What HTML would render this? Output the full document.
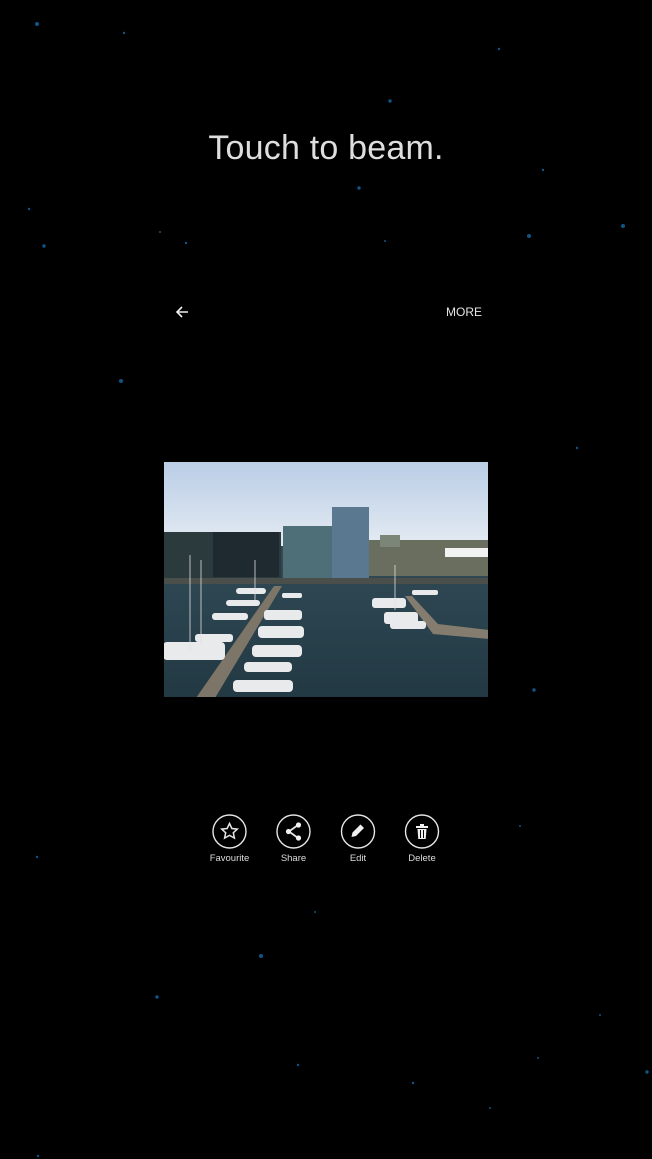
<!DOCTYPE html>
<html><head><meta charset="utf-8"><style>
html,body{margin:0;padding:0;background:#000;width:652px;height:1159px;overflow:hidden;font-family:"Liberation Sans",sans-serif;}
.t{position:absolute;left:0;width:652px;top:129px;text-align:center;color:#dedede;font-size:34px;letter-spacing:0.2px}
.more{position:absolute;left:446px;top:305px;color:#e6e6e6;font-size:12px}
.lbl{position:absolute;top:853px;width:80px;text-align:center;color:#ddd;font-size:9.5px}
</style></head><body>
<svg width="652" height="1159" style="position:absolute;left:0;top:0">
<g fill="#0f5585">
<circle cx="37" cy="24" r="2"/><circle cx="124" cy="33" r="1.2"/><circle cx="499" cy="49" r="1.2"/><circle cx="390" cy="101" r="1.7"/><circle cx="359" cy="188" r="1.7"/><circle cx="44" cy="246" r="1.7"/><circle cx="186" cy="243" r="1.2"/><circle cx="529" cy="236" r="2"/><circle cx="623" cy="226" r="2"/><circle cx="121" cy="381" r="2"/><circle cx="577" cy="448" r="1.2"/><circle cx="534" cy="690" r="1.7"/><circle cx="261" cy="956" r="2"/><circle cx="157" cy="997" r="1.7"/><circle cx="37" cy="857" r="1.2"/><circle cx="298" cy="1065" r="1.2"/><circle cx="647" cy="1072" r="1.7"/><circle cx="413" cy="1083" r="1.2"/><circle cx="543" cy="170" r="1.2"/><circle cx="29" cy="209" r="1.2"/><circle cx="160" cy="232" r="1"/><circle cx="385" cy="241" r="1"/><circle cx="538" cy="1058" r="1"/><circle cx="490" cy="1108" r="1"/><circle cx="600" cy="1015" r="1"/><circle cx="520" cy="826" r="1"/><circle cx="315" cy="912" r="1"/><circle cx="38" cy="1156" r="1.2"/>
</g>
<path d="M188 312H177M182 307L177 312L182 317" stroke="#eee" stroke-width="1.6" fill="none"/>
<defs>
<linearGradient id="sky" x1="0" y1="0" x2="0" y2="1"><stop offset="0" stop-color="#b9cde6"/><stop offset="1" stop-color="#e4ebf2"/></linearGradient>
<linearGradient id="wat" x1="0" y1="0" x2="0" y2="1"><stop offset="0" stop-color="#3b5560"/><stop offset="1" stop-color="#223944"/></linearGradient>
</defs>
<rect x="163" y="461" width="326" height="237" fill="url(#wat)"/>
<rect x="163" y="461" width="326" height="85" fill="url(#sky)"/>
<rect x="163" y="532" width="118" height="48" fill="#2b3a3c"/>
<rect x="213" y="532" width="66" height="45" fill="#1e2a30"/>
<rect x="283" y="526" width="52" height="52" fill="#4f6f78"/>
<rect x="332" y="507" width="37" height="72" fill="#5a7890"/>
<rect x="369" y="540" width="120" height="36" fill="#6a6e5e"/>
<rect x="445" y="548" width="44" height="9" fill="#f2f2f2"/>
<rect x="380" y="535" width="20" height="12" fill="#7b8578"/>
<rect x="163" y="578" width="326" height="6" fill="#4a4f4c"/>
<polygon points="196,698 215,698 282,586 274,586" fill="#7d7668"/>
<polygon points="405,596 412,596 438,624 489,630 489,639 433,634" fill="#847c6e"/>
<g fill="#e8eaec">
<rect x="163" y="642" width="62" height="18" rx="4"/>
<rect x="195" y="634" width="38" height="8" rx="3"/>
<rect x="212" y="613" width="36" height="7" rx="3"/>
<rect x="226" y="600" width="34" height="6" rx="3"/>
<rect x="236" y="588" width="30" height="6" rx="3"/>
<rect x="233" y="680" width="60" height="12" rx="4"/>
<rect x="244" y="662" width="48" height="10" rx="4"/>
<rect x="252" y="645" width="50" height="12" rx="4"/>
<rect x="258" y="626" width="46" height="12" rx="4"/>
<rect x="264" y="610" width="38" height="10" rx="3"/>
<rect x="282" y="593" width="20" height="5" rx="2"/>
<rect x="372" y="598" width="34" height="10" rx="3"/>
<rect x="384" y="612" width="34" height="12" rx="3"/>
<rect x="390" y="621" width="36" height="8" rx="3"/>
<rect x="412" y="590" width="26" height="5" rx="2"/>
</g>
<g stroke="#e0e0e0" stroke-width="0.8"><line x1="190" y1="555" x2="190" y2="650"/><line x1="201" y1="560" x2="201" y2="645"/><line x1="255" y1="560" x2="255" y2="600"/><line x1="395" y1="565" x2="395" y2="610"/></g>
<rect x="163.5" y="461.5" width="325" height="236" fill="none" stroke="#000" stroke-width="1"/>
<g stroke="#e6e6e6" stroke-width="1.4" fill="none">
<circle cx="229.5" cy="831.5" r="16.5"/><circle cx="293.5" cy="831.5" r="16.5"/><circle cx="358" cy="831.5" r="16.5"/><circle cx="422" cy="831.5" r="16.5"/>
<path d="M229.5 823.5l2.4 5 5.4.6-4 3.7 1.1 5.3-4.9-2.7-4.9 2.7 1.1-5.3-4-3.7 5.4-.6z" stroke-width="1.5"/>
<path d="M298 825L289 831.5L298 838" stroke-width="1.8"/>
</g>
<g fill="#f0f0f0">
<circle cx="298.5" cy="825" r="2.6"/><circle cx="288.5" cy="831.5" r="2.6"/><circle cx="298.5" cy="838" r="2.6"/>
<path d="M360.5 824.5l3.5 3.5-8 8-4.5 1 1-4.5z"/>
<rect x="416" y="826" width="12" height="2"/><rect x="420" y="824" width="4" height="2"/>
<path d="M417.5 829h9l-.8 10h-7.4z"/>
</g>
<g stroke="#000" stroke-width="1"><line x1="420.5" y1="830" x2="420.5" y2="838"/><line x1="423.5" y1="830" x2="423.5" y2="838"/></g>
</svg>
<div class="t">Touch to beam.</div>
<div class="more">MORE</div>
<div class="lbl" style="left:189.5px">Favourite</div>
<div class="lbl" style="left:253.5px">Share</div>
<div class="lbl" style="left:318px">Edit</div>
<div class="lbl" style="left:382px">Delete</div>
</body></html>
